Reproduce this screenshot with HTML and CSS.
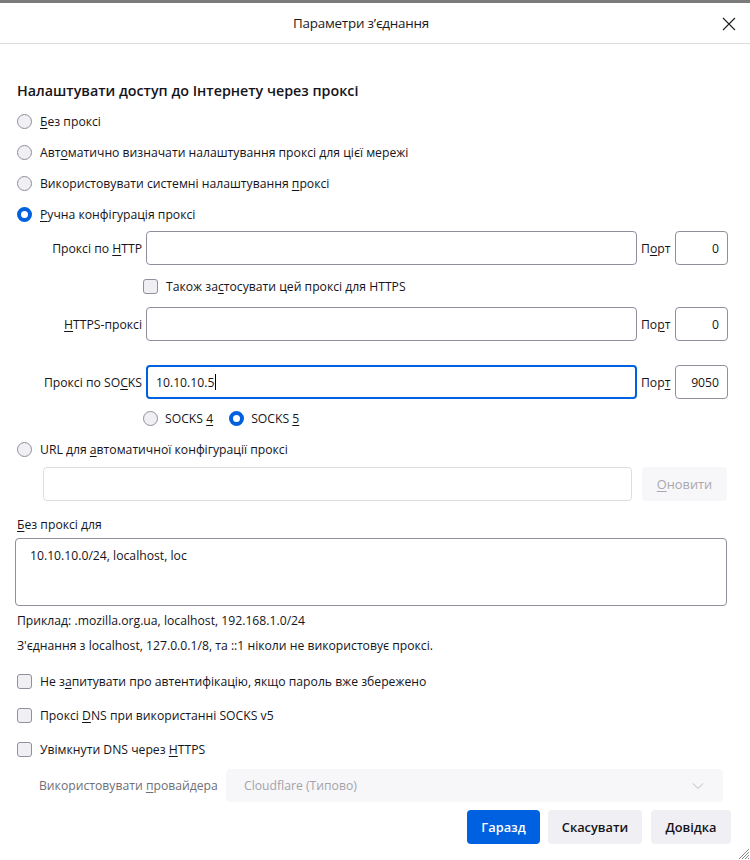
FILE: index.html
```html
<!DOCTYPE html>
<html lang="uk">
<head>
<meta charset="utf-8">
<title>Параметри з'єднання</title>
<link rel="stylesheet" href="styles.css">
</head>
<body>
<div class="topstrip"></div>
<div class="header">
  <div class="title">Параметри з’єднання</div>
  <div class="close">
    <svg width="14" height="14" viewBox="0 0 14 14"><path d="M1 1L13 13M13 1L1 13" stroke="#1f1f1f" stroke-width="1.1" fill="none"/></svg>
  </div>
</div>
<div class="content">
  <h1 class="heading">Налаштувати доступ до Інтернету через проксі</h1>

  <div class="opt r1"><span class="radio"></span><span><u>Б</u>ез проксі</span></div>
  <div class="opt"><span class="radio"></span><span>Авт<u>о</u>матично визначати налаштування проксі для цієї мережі</span></div>
  <div class="opt"><span class="radio"></span><span>Використовувати системні налаштування <u>п</u>роксі</span></div>
  <div class="opt"><span class="radio checked"></span><span><u>Р</u>учна конфігурація проксі</span></div>

  <div class="grid g-http">
    <span class="flabel">Проксі по <u>H</u>TTP</span>
    <span class="input"></span>
    <span class="plabel">П<u>о</u>рт</span>
    <span class="input port">0</span>
  </div>
  <div class="alsorow"><span class="check"></span><span>Також за<u>с</u>тосувати цей проксі для HTTPS</span></div>
  <div class="grid g-https">
    <span class="flabel"><u>H</u>TTPS-проксі</span>
    <span class="input"></span>
    <span class="plabel">По<u>р</u>т</span>
    <span class="input port">0</span>
  </div>
  <div class="grid g-socks">
    <span class="flabel">Проксі по SO<u>C</u>KS</span>
    <span class="input focused">10.10.10.5<span class="caret"></span></span>
    <span class="plabel">Пор<u>т</u></span>
    <span class="input port">9050</span>
  </div>
  <div class="socksver">
    <span class="radio"></span><span class="sv">SOCKS <u>4</u></span>
    <span class="radio checked"></span><span>SOCKS <u>5</u></span>
  </div>
  <div class="opt urlopt"><span class="radio"></span><span>URL для <u>а</u>втоматичної конфігурації проксі</span></div>
  <div class="urlrow">
    <span class="input disabled"></span>
    <span class="btn dis"><u>О</u>новити</span>
  </div>

  <div class="noproxy"><u>Б</u>ез проксі для</div>
  <div class="textarea">10.10.10.0/24, localhost, loc</div>
  <div class="hint h1">Приклад: .mozilla.org.ua, localhost, 192.168.1.0/24</div>
  <div class="hint h2">З'єднання з localhost, 127.0.0.1/8, та ::1 ніколи не використовує проксі.</div>

  <div class="opt c1"><span class="check"></span><span>Не з<u>а</u>питувати про автентифікацію, якщо пароль вже збережено</span></div>
  <div class="opt c2"><span class="check"></span><span>Проксі <u>D</u>NS при використанні SOCKS v5</span></div>
  <div class="opt c3"><span class="check"></span><span>Увімкнути DNS через <u>H</u>TTPS</span></div>

  <div class="provrow">
    <span class="provlabel">Використовувати <u>п</u>ровайдера</span>
    <span class="select">
      <span>Cloudflare (Типово)</span>
      <svg width="12" height="8" viewBox="0 0 12 8"><path d="M1 1.5L6 6.5L11 1.5" stroke="#b8b8c0" stroke-width="1" fill="none"/></svg>
    </span>
  </div>

  <div class="buttons">
    <span class="btn primary">Гаразд</span>
    <span class="btn b-cancel">Скасувати</span>
    <span class="btn b-help"><u>Д</u>овідка</span>
  </div>
</div>
<svg class="grip" width="14" height="14" viewBox="0 0 14 14"><path d="M13 3L3 13M13 6L6 13M13 9L9 13M13 12L12 13" stroke="#8a8a8a" stroke-width="1"/></svg>
</body>
</html>
```
FILE: styles.css
```css
* { box-sizing: border-box; }
html, body { margin: 0; padding: 0; background: #fff; }
body {
  width: 750px;
  height: 860px;
  overflow: hidden;
  position: relative;
  font-family: "Open Sans", "Noto Sans", sans-serif;
  font-size: 12.2px;
  color: #15141a;
}
u { text-decoration: underline; text-underline-offset: 2px; }
.topstrip { height: 3px; background: #7b7b7b; }
.header {
  height: 41px;
  border-bottom: 1px solid #dcdcdc;
  display: flex;
  align-items: center;
  justify-content: center;
  padding-right: 28px;
  position: relative;
}
.title { font-size: 13.4px; color: #1a1a1a; letter-spacing: -0.2px; }
.close { position: absolute; right: 14px; top: 14px; width: 14px; height: 14px; display: flex; }
.content { padding: 0 0 0 17px; }
.heading {
  margin: 37px 0 0 0;
  font-size: 14.3px;
  font-weight: 600;
  line-height: 20px;
  height: 20px;
}
.opt { display: flex; align-items: center; height: 20px; gap: 8px; }
.r1 { margin-top: 10px; }
.opt + .opt { margin-top: 11px; }
.radio {
  width: 15px; height: 15px; border-radius: 50%;
  border: 1px solid #8f8f9d; background: #f0f0f4;
  flex: none;
}
.radio.checked { border: 4px solid #0061e0; background: #fff; }
.check {
  width: 15px; height: 15px; border-radius: 3px;
  border: 1px solid #8f8f9d; background: #f0f0f4; flex: none;
}
.grid {
  display: grid;
  grid-template-columns: 125px 491px 31px 52px;
  column-gap: 4px;
  align-items: center;
  height: 34px;
}
.grid > .input.port { margin-left: -1px; }
.g-http { margin-top: 7px; }
.g-https { margin-top: 11px; }
.g-socks { margin-top: 24px; }
.flabel { text-align: right; }
.plabel { text-align: left; }
.input {
  height: 34px;
  border: 1px solid #8f8f9d;
  border-radius: 4px;
  background: #fff;
  display: flex;
  align-items: center;
  padding: 0 9px;
}
.input.port { justify-content: flex-end; padding-right: 8px; }
.input.focused { border: 2px solid #0061e0; padding-left: 8px; }
.caret { display: inline-block; width: 1px; height: 16px; background: #000; margin-left: 1px; }
.alsorow { display: flex; align-items: center; gap: 8px; height: 20px; margin: 11px 0 0 126px; }
.socksver { display: flex; align-items: center; height: 20px; margin: 9px 0 0 126px; }
.socksver .radio { margin-right: 7px; }
.socksver .sv { margin-right: 16px; }
.urlopt { margin-top: 11px; }
.urlrow { display: flex; gap: 10px; margin: 8px 0 0 26px; width: 684px; }
.urlrow .input { flex: 1; }
.input.disabled { border-color: #dcdce2; }
.btn {
  height: 34px;
  display: inline-flex; align-items: center; justify-content: center;
  border-radius: 4px;
  background: #f0f0f4;
  padding: 0;
  font-weight: 600;
  font-size: 12.8px;
}
.btn.dis { width: 85px; background: #f7f7f9; color: #a8a8b0; font-weight: 400; }
.noproxy { margin-top: 15px; height: 18px; line-height: 18px; }
.textarea {
  margin: 4px 0 0 -2px;
  width: 712px; height: 68px;
  border: 1px solid #8f8f9d; border-radius: 4px;
  padding: 8px 14px;
  line-height: 18px;
}
.hint { height: 18px; line-height: 18px; }
.h1 { margin-top: 6px; }
.h2 { margin-top: 7px; }
.c1 { margin-top: 16px; }
.opt.c2, .opt.c3 { margin-top: 14px; }
.provrow { display: flex; align-items: center; margin: 10px 0 0 22px; height: 33px; }
.provlabel { color: #6f6f78; width: 187px; }
.select {
  width: 497px; height: 33px;
  background: #f7f7f9; border-radius: 4px;
  display: flex; align-items: center; justify-content: space-between;
  padding: 0 19px 0 18px;
  color: #a3a3ab;
}
.buttons { display: flex; gap: 8px; margin: 8px 0 0 450px; }
.btn.primary { background: #0061e0; color: #fff; width: 73px; }
.b-cancel { width: 94px; }
.b-help { width: 80px; margin-left: 1px; }
.grip { position: absolute; right: 0; bottom: 0; }
```
